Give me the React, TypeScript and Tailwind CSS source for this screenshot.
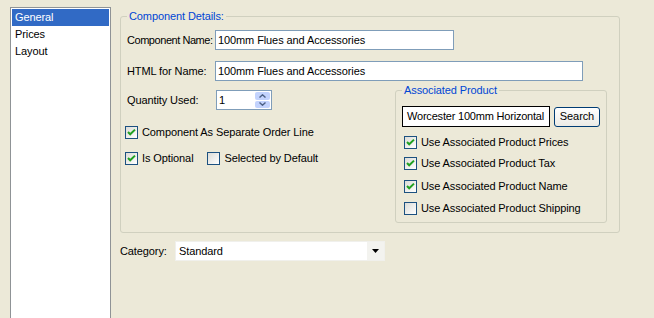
import React from 'react';

function CheckBox({ checked }: { checked?: boolean }) {
  return (
    <span className="flex h-[13px] w-[13px] shrink-0 items-center justify-center border border-[#1C5180] bg-linear-to-br from-[#DCDCD7] to-white">
      {checked && (
        <svg width="11" height="11" viewBox="0 0 11 11">
          <path d="M2 5 L4.2 7.3 L9 2.6" stroke="#21A121" strokeWidth="2" fill="none" />
        </svg>
      )}
    </span>
  );
}

function Check({ label, checked }: { label: string; checked?: boolean }) {
  return (
    <div className="flex h-[13px] items-center gap-[4px]">
      <CheckBox checked={checked} />
      <span className="leading-none">{label}</span>
    </div>
  );
}

function TextBox({ value, className }: { value: string; className: string }) {
  return (
    <div className={`flex h-[20px] items-center border border-[#7F9DB9] bg-white px-[2px] ${className}`}>
      {value}
    </div>
  );
}

function Legend({ text }: { text: string }) {
  return (
    <span className="absolute -top-[7px] left-[6px] bg-[#ECE9D8] px-[2px] leading-[13px] text-[#0046D5]">
      {text}
    </span>
  );
}

export default function App() {
  return (
    <div className="flex h-[318px] w-[654px] overflow-hidden whitespace-nowrap bg-[#ECE9D8] font-['Liberation_Sans',Arial,sans-serif] text-[11px] tracking-[-0.1px] text-black">
      {/* tab list */}
      <div className="pl-[10px] pt-[7px]">
        <div className="h-[320px] w-[101px] border-x border-t border-[#8f9396] bg-white p-[1px]">
          <div className="flex h-[17px] items-center bg-[#316AC5] px-[3px] text-white">General</div>
          <div className="flex h-[17px] items-center px-[3px]">Prices</div>
          <div className="flex h-[17px] items-center px-[3px]">Layout</div>
        </div>
      </div>

      <div className="flex flex-col pl-[9px] pt-[16px]">
        <div className="relative h-[217px] w-[500px] rounded-[3px] border border-[#D0D0BF] pl-[6px] pt-[13px]">
          <Legend text="Component Details:" />

          <div className="flex items-center">
            <span className="w-[88px] tracking-[-0.45px]">Component Name:</span>
            <TextBox value="100mm Flues and Accessories" className="w-[239px]" />
          </div>
          <div className="mt-[11px] flex items-center">
            <span className="w-[88px]">HTML for Name:</span>
            <TextBox value="100mm Flues and Accessories" className="w-[368px]" />
          </div>

          <div className="mt-[9px] flex">
            <div className="flex flex-col">
              <div className="flex items-center">
                <span className="w-[89px]">Quantity Used:</span>
                <div className="flex h-[20px] w-[56px] items-center border border-[#7F9DB9] bg-white pl-[2px]">
                  <span className="flex-1">1</span>
                  <div className="mr-[1px] flex h-[16px] w-[15px] flex-col gap-[1px]">
                    <div className="flex flex-1 items-center justify-center rounded-[2px] bg-[#C3D3FD]">
                      <svg width="7" height="4" viewBox="0 0 7 4">
                        <path d="M0.5 3.5 L3.5 0.8 L6.5 3.5" stroke="#4D6185" strokeWidth="1.4" fill="none" />
                      </svg>
                    </div>
                    <div className="flex flex-1 items-center justify-center rounded-[2px] bg-[#C3D3FD]">
                      <svg width="7" height="4" viewBox="0 0 7 4">
                        <path d="M0.5 0.5 L3.5 3.2 L6.5 0.5" stroke="#4D6185" strokeWidth="1.4" fill="none" />
                      </svg>
                    </div>
                  </div>
                </div>
              </div>
              <div className="-ml-[2px] mt-[16px]">
                <Check label="Component As Separate Order Line" checked />
              </div>
              <div className="-ml-[2px] mt-[13px] flex gap-[14px]">
                <Check label="Is Optional" checked />
                <Check label="Selected by Default" />
              </div>
            </div>

            <div className="relative ml-auto mr-[12px] h-[133px] w-[212px] rounded-[3px] border border-[#D0D0BF] pl-[6px] pt-[15px]">
              <Legend text="Associated Product" />
              <div className="flex items-center gap-[4px]">
                <div className="flex h-[21px] w-[148px] items-center overflow-hidden border border-black bg-white px-[4px] tracking-[-0.2px]">
                  Worcester 100mm Horizontal
                </div>
                <button className="flex h-[20px] w-[46px] items-center justify-center rounded-[3px] border border-[#003C74] bg-linear-to-b from-white to-[#ECEBE6]">
                  Search
                </button>
              </div>
              <div className="ml-[2px] mt-[9px] flex flex-col">
                <Check label="Use Associated Product Prices" checked />
                <div className="mt-[8px]">
                  <Check label="Use Associated Product Tax" checked />
                </div>
                <div className="mt-[10px]">
                  <Check label="Use Associated Product Name" checked />
                </div>
                <div className="mt-[9px]">
                  <Check label="Use Associated Product Shipping" />
                </div>
              </div>
            </div>
          </div>
        </div>

        <div className="mt-[8px] flex items-center">
          <span className="w-[55px]">Category:</span>
          <div className="flex h-[20px] w-[210px] items-center border border-[#F0F0EC] bg-white pl-[3px]">
            <span className="flex-1">Standard</span>
            <div className="flex h-[18px] w-[17px] items-center justify-center bg-[#F3F3EF]">
              <svg width="7" height="4" viewBox="0 0 7 4">
                <path d="M0 0 H7 L3.5 4 Z" fill="#000" />
              </svg>
            </div>
          </div>
        </div>
      </div>
    </div>
  );
}
